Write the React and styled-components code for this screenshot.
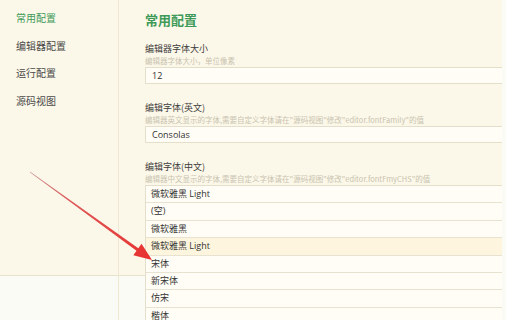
import styled, { createGlobalStyle } from "styled-components";

const GlobalStyle = createGlobalStyle`
  html, body {
    margin: 0;
    padding: 0;
    background: #fbfbf6;
  }
  body {
    font-family: "Noto Sans CJK SC", "Open Sans", sans-serif;
  }
`;

const Styled = {};

Styled.Page = styled.div`
  position: relative;
  width: 506px;
  height: 320px;
  overflow: hidden;
`;

Styled.Window = styled.div`
  display: grid;
  grid-template-columns: 119px 1fr;
  width: 502px;
  height: 275px;
  background: #fcf8e9;
  border-bottom: 1px solid #e9e3cd;
`;

Styled.Sidebar = styled.div`
  display: flex;
  flex-direction: column;
  padding-top: 4px;
  border-right: 1px solid #eee8d3;
`;

Styled.NavItem = styled.div`
  height: 27.5px;
  line-height: 27.5px;
  padding-left: 16px;
  font-size: 10px;
  color: ${(props) => (props.active ? "#3f9a5a" : "#4a4a4a")};
`;

Styled.Main = styled.div`
  padding: 10px 0 0 26px;
`;

Styled.Heading = styled.h2`
  margin: 0 0 13px;
  font-size: 13px;
  line-height: 20px;
  font-weight: 700;
  color: #3f9a5a;
`;

Styled.Field = styled.div`
  margin-bottom: 18px;
`;

Styled.Label = styled.div`
  height: 12px;
  font-size: 9px;
  line-height: 12px;
  color: #3c3c3c;
`;

Styled.Hint = styled.div`
  height: 11px;
  font-size: 7.5px;
  line-height: 11px;
  color: #c9c3b0;
  white-space: nowrap;
`;

Styled.Input = styled.div`
  box-sizing: border-box;
  height: 17px;
  margin-top: 1px;
  padding-left: 6px;
  line-height: 15px;
  font-family: "Open Sans", "Noto Sans CJK SC", sans-serif;
  font-size: 9px;
  color: #333;
  background: #fffdf6;
  border: 1px solid #e4dfca;
  border-right: none;
`;

Styled.List = styled.div`
  margin-top: 1px;
  border-left: 1px solid #e4dfca;
  border-top: 1px solid #e4dfca;
`;

Styled.Option = styled.div`
  box-sizing: border-box;
  height: 17.4px;
  padding-left: 5px;
  line-height: 16px;
  font-family: "Open Sans", "Noto Sans CJK SC", sans-serif;
  font-size: 9px;
  color: #333;
  background: ${(props) => (props.hover ? "#fdf5dd" : "#fffdf5")};
  border-bottom: 1px solid #e8e3d0;
`;

Styled.Arrow = styled.svg`
  position: absolute;
  left: 0;
  top: 0;
  pointer-events: none;
`;

const navItems = ["常用配置", "编辑器配置", "运行配置", "源码视图"];

const fontOptions = [
  "微软雅黑 Light",
  "(空)",
  "微软雅黑",
  "微软雅黑 Light",
  "宋体",
  "新宋体",
  "仿宋",
  "楷体",
];

const App = () => {
  return (
    <Styled.Page>
      <GlobalStyle />
      <Styled.Window>
        <Styled.Sidebar>
          {navItems.map((n, i) => (
            <Styled.NavItem key={i} active={i === 0}>
              {n}
            </Styled.NavItem>
          ))}
        </Styled.Sidebar>
        <Styled.Main>
          <Styled.Heading>常用配置</Styled.Heading>
          <Styled.Field>
            <Styled.Label>编辑器字体大小</Styled.Label>
            <Styled.Hint>编辑器字体大小，单位像素</Styled.Hint>
            <Styled.Input>12</Styled.Input>
          </Styled.Field>
          <Styled.Field>
            <Styled.Label>编辑字体(英文)</Styled.Label>
            <Styled.Hint>
              编辑器英文显示的字体,需要自定义字体请在"源码视图"修改"editor.fontFamily"的值
            </Styled.Hint>
            <Styled.Input>Consolas</Styled.Input>
          </Styled.Field>
          <div>
            <Styled.Label>编辑字体(中文)</Styled.Label>
            <Styled.Hint>
              编辑器中文显示的字体,需要自定义字体请在"源码视图"修改"editor.fontFmyCHS"的值
            </Styled.Hint>
            <Styled.List>
              {fontOptions.map((f, i) => (
                <Styled.Option key={i} hover={i === 3}>
                  {f}
                </Styled.Option>
              ))}
            </Styled.List>
          </div>
        </Styled.Main>
      </Styled.Window>
      <Styled.Arrow width="506" height="320" viewBox="0 0 506 320">
        <defs>
          <linearGradient id="arrowFade" x1="30" y1="172" x2="152" y2="260" gradientUnits="userSpaceOnUse">
            <stop offset="0" stopColor="#c98f8f" />
            <stop offset="0.35" stopColor="#dd5a5a" />
            <stop offset="1" stopColor="#e8302e" />
          </linearGradient>
        </defs>
        <polygon
          points="29.8,172.2 136.5,250.7 133.3,255.2 152,260 141.5,243.8 138.3,248.3 30.2,171.8"
          fill="url(#arrowFade)"
        />
      </Styled.Arrow>
    </Styled.Page>
  );
};

export default App;
